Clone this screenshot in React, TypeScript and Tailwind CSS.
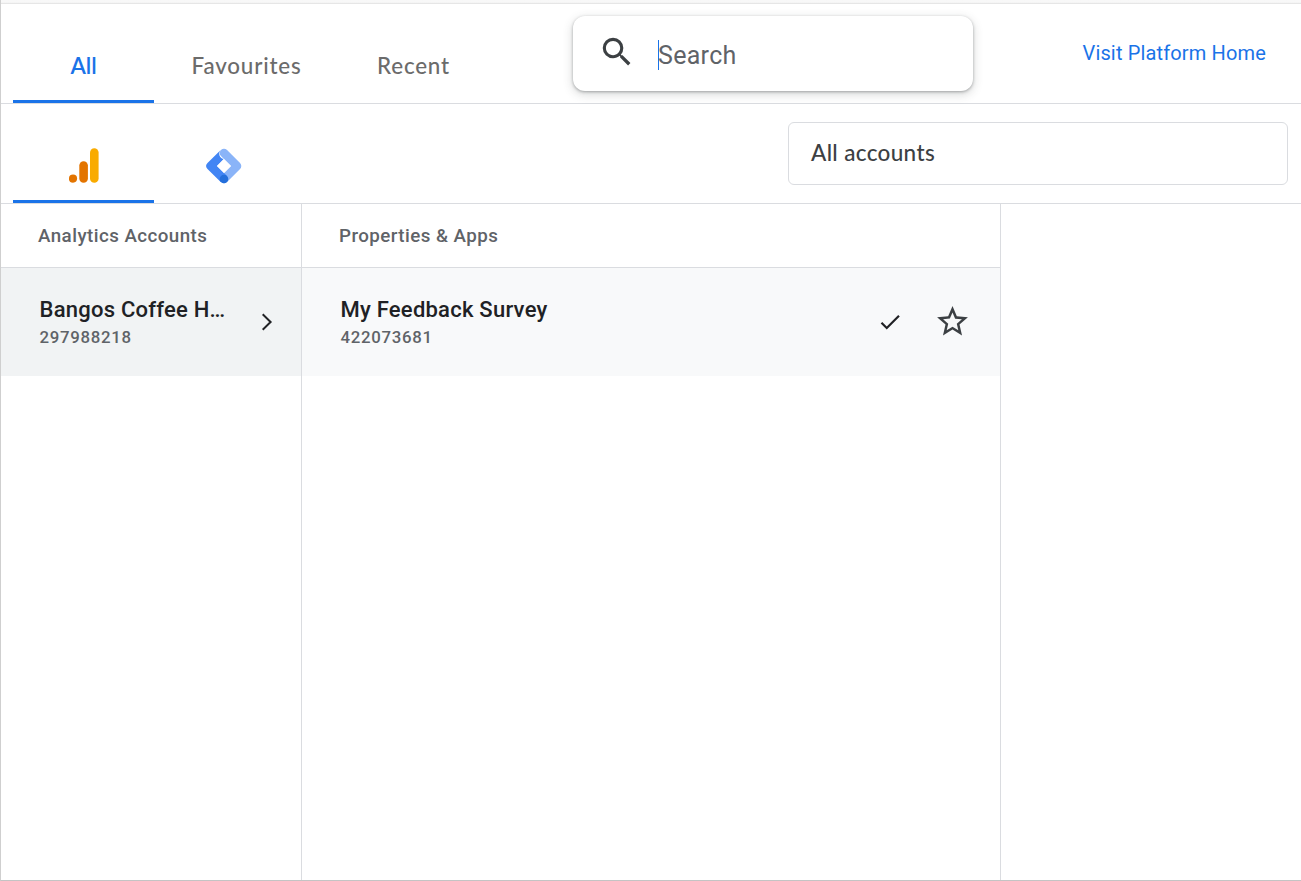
import React from "react";

const tabs = [
  { label: "All", width: "w-[141px]", active: true },
  { label: "Favourites", width: "w-[185px]", active: false },
  { label: "Recent", width: "w-[149px]", active: false },
];

function AnalyticsLogo() {
  return (
    <svg width="30" height="35" viewBox="0 0 30 35" className="block">
      <circle cx="4" cy="30.6" r="4.1" fill="#e37400" />
      <rect x="10.3" y="13.2" width="8.6" height="21.5" rx="4.3" fill="#e37400" />
      <rect x="21" y="0.2" width="8.6" height="34.5" rx="4.3" fill="#f9ab00" />
    </svg>
  );
}

function TagManagerLogo() {
  return (
    <svg width="36" height="36" viewBox="0 0 36 36" className="block" fill="none" strokeLinejoin="round" strokeLinecap="round">
      <path d="M18 5 L31 18 L18 31" stroke="#8ab4f8" strokeWidth="8.6" />
      <path d="M14.7 1.9 L1.5 15.1 a4.1 4.1 0 0 0 0 5.8 L14.7 34.1 L20.8 27.8 L11 18 L17.5 11.3 C13 10 12 5 14.7 1.9Z" fill="#4285f4" />
      <path d="M18 11 L25 18 L18 25 L11 18Z" fill="#fff" />
      <circle cx="18" cy="31" r="4.3" fill="#246fdb" />
    </svg>
  );
}

function ColumnHeader({ children }: { children: React.ReactNode }) {
  return (
    <div className="flex h-16 items-center border-b border-[#dadce0] pl-[37px] pt-px text-[18.75px] font-medium tracking-[0.45px] text-[#5f6368]">
      {children}
    </div>
  );
}

function Entry({ name, id }: { name: string; id: string }) {
  return (
    <div className="whitespace-nowrap pt-[27px]">
      <div className="text-[22px] font-medium leading-[30px] tracking-[0.24px] text-[#202124]">{name}</div>
      <div className="text-[16.8px] font-medium leading-6 tracking-[0.7px] text-[#5f6368]">{id}</div>
    </div>
  );
}

export default function App() {
  return (
    <div className="flex h-[881px] w-[1301px] flex-col overflow-hidden border-b border-l border-b-[#c4c4c4] border-l-[#cfcfcf] bg-white font-['Roboto',sans-serif]">
      <div className="h-[3px] shrink-0 bg-linear-to-b from-[#f8f8f8] from-50% to-[#f3f3f3]" />
      <div className="h-px shrink-0 bg-[#e6e6e6]" />
      <header className="flex h-[100px] shrink-0 border-b border-[#dadce0] pl-3">
        <nav className="flex w-[560px] font-['Lato',sans-serif] text-[22.4px] tracking-[0.8px]">
          {tabs.map((tab) => (
            <div
              key={tab.label}
              className={`flex justify-center border-b-[3px] pt-[47px] leading-[30px] ${tab.width} ${
                tab.active ? "border-[#1a73e8] font-semibold tracking-normal text-[#1a73e8]" : "border-transparent font-medium text-[#6b6b6b]"
              }`}
            >
              {tab.label}
            </div>
          ))}
        </nav>
        <div className="mt-3 flex h-[75px] w-[400px] rounded-xl bg-white pl-[25px] shadow-[0_1px_3px_rgba(60,64,67,0.4),0_3px_10px_1px_rgba(60,64,67,0.18)]">
          <svg width="38" height="38" viewBox="0 0 24 24" fill="#3c4043" className="mt-[17px]">
            <path d="M15.5 14h-.79l-.28-.27A6.471 6.471 0 0 0 16 9.5 6.5 6.5 0 1 0 9.5 16c1.61 0 3.09-.59 4.23-1.57l.27.28v.79l5 4.99L20.49 19l-4.99-5zm-6 0C7.01 14 5 11.99 5 9.5S7.01 5 9.5 5 14 7.01 14 9.5 11.99 14 9.5 14z" />
          </svg>
          <div className="ml-[22px] mt-6 h-[30px] w-px bg-[#1a73e8]" />
          <div className="-ml-px mt-[25px] text-[25px] leading-[30px] tracking-[0.3px] text-[#5f6368]">Search</div>
        </div>
        <a className="ml-auto mr-[35px] mt-[34px] text-[20px] leading-[30px] tracking-[0.15px] text-[#1a73e8]">Visit Platform Home</a>
      </header>
      <section className="flex h-[100px] shrink-0 border-b border-[#dadce0] pl-3">
        <div className="flex w-[141px] justify-center border-b-[3px] border-[#1a73e8] pt-11">
          <AnalyticsLogo />
        </div>
        <div className="flex w-[140px] justify-center pt-[43.5px]">
          <TagManagerLogo />
        </div>
        <div className="ml-auto mr-[13px] mt-[18px] flex h-[63px] w-[500px] items-center rounded-md border border-[#dadce0] pb-px pl-[22px] font-['Lato',sans-serif] text-[22.5px] font-medium tracking-[0.35px] text-[#3c4043]">
          All accounts
        </div>
      </section>
      <main className="flex min-h-0 flex-1">
        <section className="w-[301px] border-r border-[#dadce0]">
          <ColumnHeader>Analytics Accounts</ColumnHeader>
          <div className="flex h-[108px] justify-between bg-[#f1f3f4] pl-[38.5px] pr-[28.5px]">
            <Entry name="Bangos Coffee H…" id="297988218" />
            <svg width="12" height="18" viewBox="0 0 12 18" fill="none" stroke="#202124" strokeWidth="2" className="mt-[45px]">
              <path d="M1.7 1.3 9.6 9 1.7 16.7" />
            </svg>
          </div>
        </section>
        <section className="w-[699px] border-r border-[#dadce0]">
          <ColumnHeader>Properties &amp; Apps</ColumnHeader>
          <div className="flex h-[108px] bg-[#f8f9fa] pl-[38.5px] pr-[29px]">
            <Entry name="My Feedback Survey" id="422073681" />
            <svg width="26" height="26" viewBox="0 0 24 24" fill="#202124" className="ml-auto mt-[41px]">
              <path d="M9 16.17 4.83 12l-1.42 1.41L9 19 21 7l-1.41-1.41z" />
            </svg>
            <svg width="37" height="37" viewBox="0 0 24 24" fill="#3c4043" className="ml-[31px] mt-[35px]">
              <path d="m22 9.24-7.19-.62L12 2 9.19 8.63 2 9.24l5.46 4.73L5.82 21 12 17.27 18.18 21l-1.63-7.03L22 9.24zM12 15.4l-3.76 2.27 1-4.28-3.32-2.88 4.38-.38L12 6.1l1.71 4.04 4.38.38-3.32 2.88 1 4.28L12 15.4z" />
            </svg>
          </div>
        </section>
      </main>
    </div>
  );
}
